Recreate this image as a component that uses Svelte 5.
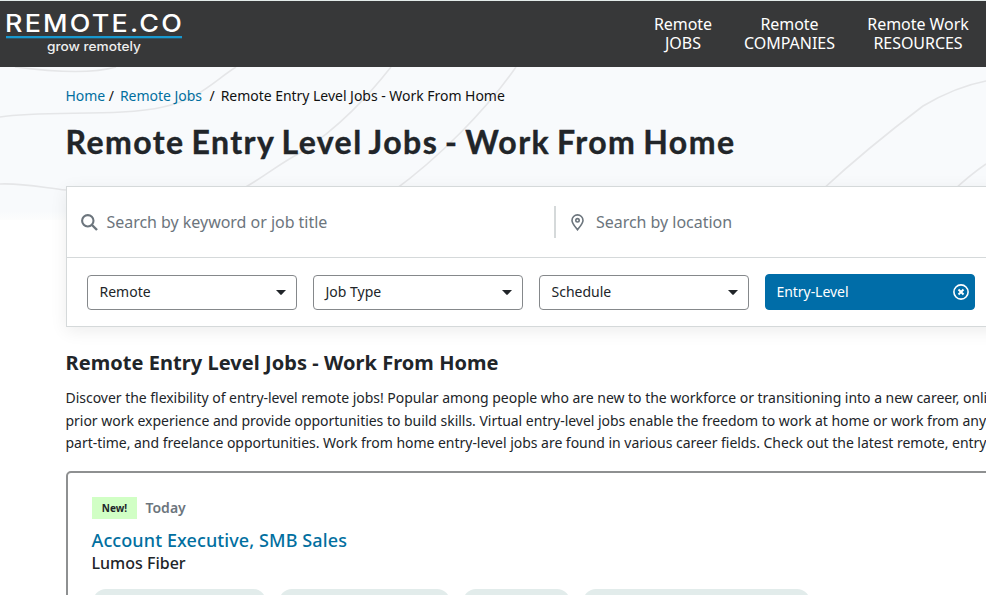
<script>
  const nav = [
    { top: 'Remote', bottom: 'JOBS', width: 58 },
    { top: 'Remote', bottom: 'COMPANIES', width: 91 },
    { top: 'Remote Work', bottom: 'RESOURCES', width: 102 }
  ];
  const filters = ['Remote', 'Job Type', 'Schedule'];
  const tags = [173, 171, 107, 227];
  const intro = [
    'Discover the flexibility of entry-level remote jobs! Popular among people who are new to the workforce or transitioning into a new career, online',
    'prior work experience and provide opportunities to build skills. Virtual entry-level jobs enable the freedom to work at home or work from anywhere',
    'part-time, and freelance opportunities. Work from home entry-level jobs are found in various career fields. Check out the latest remote, entry-level'
  ];
</script>

<div class="page">
  <header>
    <svg class="logo" width="184" height="60" viewBox="0 0 184 60" role="img" aria-label="Remote.co">
      <text class="brand" x="5" y="31" textLength="179" lengthAdjust="spacingAndGlyphs">REMOTE.CO</text>
      <rect x="6" y="35" width="176" height="2.3" fill="#1899d0" />
      <text class="tagline" x="47" y="50" textLength="94" lengthAdjust="spacingAndGlyphs">grow remotely</text>
    </svg>
    <nav>
      {#each nav as item}
        <a href="#top" style="width: {item.width}px"><span>{item.top}</span><span>{item.bottom}</span></a>
      {/each}
    </nav>
  </header>

  <main>
    <svg class="waves" width="986" height="153" viewBox="0 67 986 153" fill="none" stroke="#e5e6e8" stroke-width="1.6">
      <path d="M15 67Q85 76 116 67" />
      <path d="M0 117C45 110 120 117 163 107C200 99 215 80 236 67" />
      <path d="M0 184C24 183 45 188 66 190" />
      <path d="M236 192C255 184 278 164 300 153C340 127 368 96 391 67" />
      <path d="M392 192C440 157 486 110 516 67" />
      <path d="M822 190C850 164 890 131 923 106C945 93 965 85 986 81" />
      <path d="M954 190Q970 175 986 164" />
    </svg>

    <div class="content">
      <div class="crumbs">
        <a href="#home">Home</a><span class="s1">/</span><a href="#jobs">Remote Jobs</a><span class="s2">/</span><span class="here">Remote Entry Level Jobs - Work From Home</span>
      </div>
      <h1>Remote Entry Level Jobs - Work From Home</h1>

      <section class="search">
        <div class="fields">
          <div class="field keyword">
            <svg width="17" height="17" viewBox="0 0 17 17" fill="none" stroke="#6c757d" stroke-width="2.1">
              <circle cx="6.8" cy="6.8" r="5.7" /><path d="M11 11L16 16" stroke-width="2.4" />
            </svg>
            <span>Search by keyword or job title</span>
          </div>
          <div class="field place">
            <svg width="13" height="17" viewBox="0 0 13 17" fill="none" stroke="#6c757d" stroke-width="1.6">
              <path d="M6.5 15.8C4.6 13.3 1 9.2 1 6.4A5.5 5.5 0 0 1 12 6.4C12 9.2 8.4 13.3 6.5 15.8Z" /><circle cx="6.5" cy="6.3" r="1.7" />
            </svg>
            <span>Search by location</span>
          </div>
        </div>
        <div class="filters">
          {#each filters as name}
            <div class="select"><span>{name}</span><svg width="10" height="5" viewBox="0 0 10 5"><path d="M0 0H10L5.7 4.6Q5 5.2 4.3 4.6Z" fill="#212529" /></svg></div>
          {/each}
          <div class="select active">
            <span>Entry-Level</span>
            <svg width="16" height="16" viewBox="0 0 16 16" fill="none" stroke="#fff"><circle cx="8" cy="8" r="7.1" stroke-width="1.6" /><path d="M5.5 5.5L10.5 10.5M10.5 5.5L5.5 10.5" stroke-width="2" /></svg>
          </div>
        </div>
      </section>

      <h2>Remote Entry Level Jobs - Work From Home</h2>
      <div class="intro">
        {#each intro as line}<p>{line}</p>{/each}
      </div>

      <article>
        <div class="meta"><span class="new">New!</span><span class="date">Today</span></div>
        <a class="title" href="#job">Account Executive, SMB Sales</a>
        <div class="company">Lumos Fiber</div>
        <div class="tags">
          {#each tags as w}<span style="width: {w}px"></span>{/each}
        </div>
      </article>
    </div>
  </main>
</div>

<style>
  .page { width: 986px; height: 595px; overflow: hidden; background: #fff; color: #212529; font-family: 'Noto Sans', sans-serif; box-sizing: border-box; }
  .page :global(*) { box-sizing: border-box; }
  a { text-decoration: none; color: #016fa0; }
  header { height: 67px; background: #373839; border-top: 1px solid #e3ebea; display: flex; justify-content: space-between; padding-right: 17px; }
  .logo { flex: none; }
  .brand { font: 500 24px Inter, sans-serif; fill: #fff; letter-spacing: 2px; }
  .tagline { font: 500 12.5px Inter, sans-serif; fill: #eee; }
  nav { display: flex; gap: 32px; padding-top: 14px; }
  nav a { color: #fff; font-size: 16px; line-height: 19px; letter-spacing: -.04px; white-space: nowrap; display: flex; flex-direction: column; align-items: center; }
  main { position: relative; height: 528px; }
  .waves { position: absolute; left: 0; top: 0; background: linear-gradient(#f8fafc 94%, #fcfdfd); }
  .content { position: relative; padding-left: 66px; white-space: nowrap; }
  .crumbs { padding-top: 18px; height: 52px; margin-left: -.5px; font-size: 14px; line-height: 22px; letter-spacing: -.03px; color: #111; display: flex; }
  .s1 { margin: 0 6px 0 3.5px; }
  .s2 { margin: 0 6px 0 7.5px; }
  h1 { margin: 0 0 0 -.5px; height: 67px; font: 700 32px/46px Lato, sans-serif; letter-spacing: 1.45px; word-spacing: -2.3px; -webkit-text-stroke: .4px #212529; }
  .search { width: 1000px; height: 141px; background: #fff; border: 1px solid #d5d9da; box-shadow: 0 4px 16px rgba(0, 0, 0, .075); }
  .fields { height: 71px; border-bottom: 1px solid #d5d9da; display: flex; align-items: center; }
  .field { display: flex; align-items: center; color: #6c757d; font-size: 16px; letter-spacing: -.03px; height: 32px; }
  .keyword { width: 487px; padding-left: 14px; gap: 8.5px; }
  .place { border-left: 2px solid #d5d9da; padding-left: 14.5px; gap: 12.5px; }
  .filters { display: flex; gap: 16px; padding: 16px 0 0 20px; }
  .select { width: 210px; height: 35px; margin-top: 1px; border: 1px solid #85888b; border-radius: 4px; padding: 0 10px 0 11.5px; display: flex; align-items: center; justify-content: space-between; font-size: 14px; line-height: 32px; }
  .select span { margin-top: -1px; }
  .active { height: 36px; margin-top: 0; background: #006da8; border-color: #006da8; color: #fff; padding: 0 5px 0 10.5px; letter-spacing: -.05px; }
  h2 { margin: 22px 0 0 -.5px; font-size: 20px; line-height: 27px; font-weight: 700; letter-spacing: .05px; }
  .intro { padding-top: 11px; margin-left: -.5px; font-size: 14px; line-height: 22.5px; letter-spacing: -.028px; }
  .intro p { margin: 0; }
  article { width: 1000px; height: 180px; margin-top: 16px; border: 2px solid #8e9091; border-radius: 5px; padding: 24px 0 0 24px; }
  .meta { display: flex; align-items: center; height: 22px; gap: 8.5px; }
  .new { width: 45px; height: 22px; background: #d1ffc5; font-size: 10px; line-height: 22px; font-weight: 700; text-align: center; }
  .date { color: #6c757d; font-size: 14px; font-weight: 600; }
  .title { display: block; margin: 9px 0 0 -.5px; font-size: 18px; line-height: 24px; font-weight: 550; letter-spacing: .1px; }
  .company { margin-left: -.5px; font-size: 16px; line-height: 22px; font-weight: 500; }
  .tags { display: flex; gap: 13px; padding: 15px 0 0 .5px; }
  .tags span { height: 26px; border-radius: 13px; background: #e2eceb; }
</style>
